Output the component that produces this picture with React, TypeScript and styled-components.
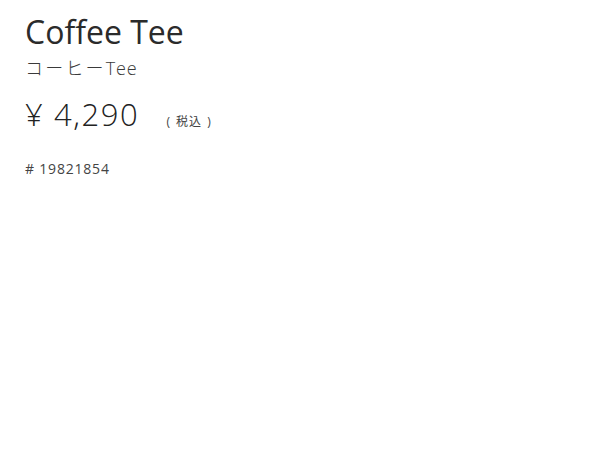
import React from 'react';
import styled, {createGlobalStyle} from 'styled-components';

const Global = createGlobalStyle`
	body {
		margin: 0;
		background: #fff;
		font-family: 'Open Sans', 'Noto Sans CJK JP', sans-serif;
		color: #333;
	}
`;

const Wrapper = styled.div`
	display: flex;
	flex-direction: column;
	padding: 10px 25px;
`;

const Title = styled.h1`
	margin: 0;
	font-size: 32px;
	font-weight: 400;
	line-height: 44px;
	color: #2b2b2b;
`;

const SubTitle = styled.h2`
	margin: 0;
	font-size: 18px;
	font-weight: 300;
	line-height: 28px;
	letter-spacing: 0.8px;
	color: #3a3a3a;
`;

const Kana = styled.span`
	letter-spacing: 2.2px;
`;

const PriceRow = styled.div`
	display: flex;
	align-items: baseline;
	gap: 27px;
	margin-top: 10px;
`;

const Price = styled.span`
	font-size: 31px;
	font-weight: 300;
	line-height: 44px;
	letter-spacing: 1.6px;
	color: #222;
`;

const Tax = styled.span`
	font-size: 12px;
	letter-spacing: 1px;
	word-spacing: 1px;
	color: #444;
`;

const Sku = styled.div`
	margin-top: 23px;
	font-size: 14px;
	letter-spacing: 0.8px;
	color: #444;
`;

export default () => (
	<>
		<Global />
		<Wrapper>
			<Title>Coffee Tee</Title>
			<SubTitle><Kana>コーヒー</Kana>Tee</SubTitle>
			<PriceRow>
				<Price>¥ 4,290</Price>
				<Tax>( 税込 )</Tax>
			</PriceRow>
			<Sku># 19821854</Sku>
		</Wrapper>
	</>
);
